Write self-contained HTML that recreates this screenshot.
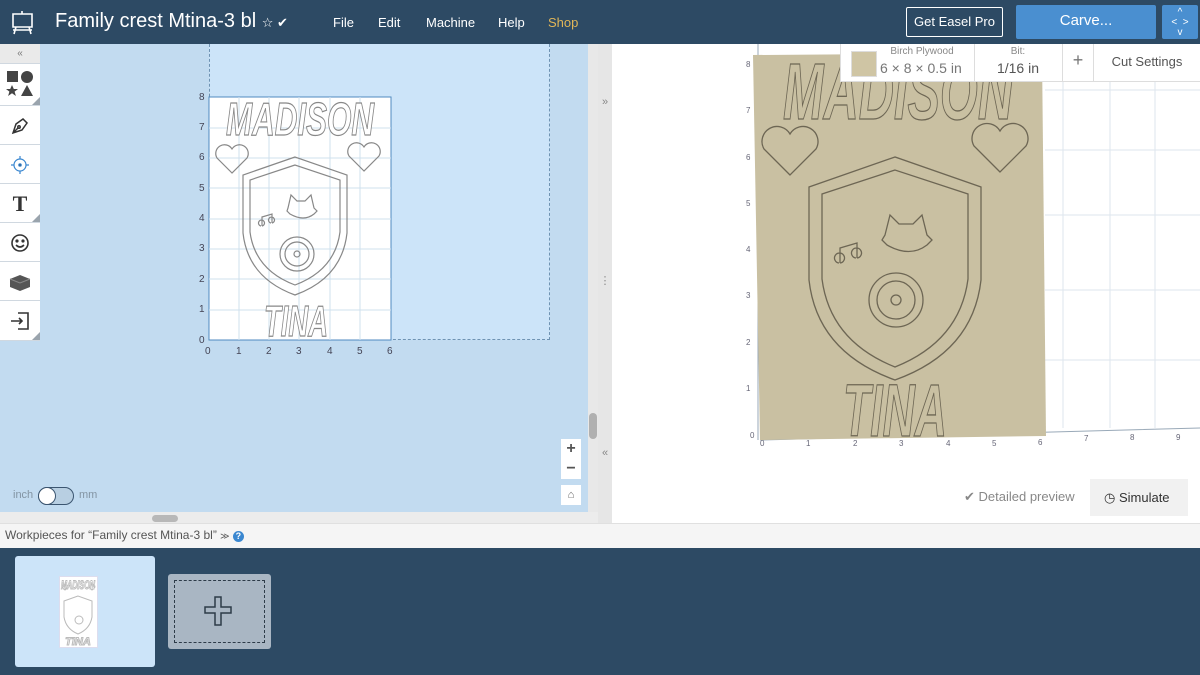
<!DOCTYPE html>
<html><head><meta charset="utf-8"><style>
*{margin:0;padding:0;box-sizing:border-box}
body{width:1200px;height:675px;overflow:hidden;position:relative;font-family:"Liberation Sans","DejaVu Sans",sans-serif;background:#2d4a64}
.abs{position:absolute}
.hdr{left:0;top:0;width:1200px;height:44px;background:#2d4a64;color:#fff}
.menu{top:15px;font-size:13px;color:#fff}
.left{left:0;top:44px;width:588px;height:468px;background:#c2dbf0}
.tool{left:0;width:40px;background:#fff;border-bottom:1px solid #d0d8e0}
.tri{position:absolute;right:0;bottom:0;width:0;height:0;border-left:8px solid transparent;border-bottom:8px solid #9aa4ad}
.right{left:612px;top:44px;width:588px;height:479px;background:#fff}
</style></head><body>
<div class="abs hdr">
 <svg class="abs" style="left:10px;top:10px" width="26" height="26" viewBox="0 0 26 26" fill="none" stroke="#fff" stroke-width="1.6"><path d="M12 1v3M3 4h19v13H3zM6 17l-2 7M19 17l2 7M3 20h19"/></svg>
 <div class="abs" style="left:55px;top:10px;font-size:20px;">Family crest Mtina-3 bl <span style="font-size:13px">☆ ✔</span></div>
 <div class="abs menu" style="left:333px">File</div>
 <div class="abs menu" style="left:378px">Edit</div>
 <div class="abs menu" style="left:426px">Machine</div>
 <div class="abs menu" style="left:498px">Help</div>
 <div class="abs menu" style="left:548px;color:#e0b658">Shop</div>
 <div class="abs" style="left:906px;top:7px;width:97px;height:30px;border:1px solid #fff;border-radius:2px;font-size:13px;text-align:center;line-height:28px">Get Easel Pro</div>
 <div class="abs" style="left:1016px;top:5px;width:140px;height:34px;background:#4a8fd0;border-radius:2px;font-size:15px;text-align:center;line-height:32px">Carve...</div>
 <div class="abs" style="left:1162px;top:5px;width:36px;height:34px;background:#4a8fd0;border-radius:2px;font-size:10px;text-align:center;line-height:10px;padding-top:3px">^<br>&lt;&nbsp;&nbsp;&gt;<br>v</div>
</div>

<div class="abs left">
 <div class="abs" style="left:209px;top:0;width:341px;height:296px;background:#cce4f9;border:1px dashed #6f93b3;border-top:none"></div>
</div>
<div class="abs tool" style="top:44px;height:20px;background:#eaeaea;text-align:center;font-size:10px;color:#777;line-height:20px">«</div>
<div class="abs tool" style="top:64px;height:42px"><svg class="abs" style="left:6px;top:6px" width="28" height="28" viewBox="0 0 28 28" fill="#444"><rect x="1" y="1" width="11" height="11"/><circle cx="21" cy="7" r="6"/><path d="M6 15l1.8 4h4.2l-3.4 2.6 1.3 4.4L6 23.3 2.1 26l1.3-4.4L0 19h4.2zM21 15l6 11H15z"/></svg><div class="tri"></div></div>
<div class="abs tool" style="top:106px;height:39px"><svg class="abs" style="left:10px;top:10px" width="20" height="20" viewBox="0 0 20 20" fill="none" stroke="#333" stroke-width="1.5"><path d="M3 17l3-9 7-5 4 4-5 7zM3 17l5-5"/><circle cx="9" cy="11" r="1.2"/></svg></div>
<div class="abs tool" style="top:145px;height:39px"><svg class="abs" style="left:10px;top:10px" width="20" height="20" viewBox="0 0 20 20" fill="none" stroke="#3a87d0" stroke-width="1.2"><circle cx="10" cy="10" r="6"/><circle cx="10" cy="10" r="1.2" fill="#333"/><path d="M10 1v3M10 16v3M1 10h3M16 10h3"/></svg></div>
<div class="abs tool" style="top:184px;height:39px;font-family:'Liberation Serif',serif;font-weight:bold;font-size:22px;text-align:center;line-height:39px;color:#333">T<div class="tri"></div></div>
<div class="abs tool" style="top:223px;height:39px"><svg class="abs" style="left:10px;top:10px" width="20" height="20" viewBox="0 0 20 20" fill="none" stroke="#333" stroke-width="1.6"><circle cx="10" cy="10" r="8"/><circle cx="7" cy="8" r=".8" fill="#333"/><circle cx="13" cy="8" r=".8" fill="#333"/><path d="M6 12q4 4 8 0"/></svg></div>
<div class="abs tool" style="top:262px;height:39px"><svg class="abs" style="left:9px;top:11px" width="22" height="18" viewBox="0 0 22 18"><path d="M1 6l10-4 10 4v8l-10 4-10-4z" fill="#555"/><path d="M1 6l10 4 10-4" fill="none" stroke="#888"/></svg></div>
<div class="abs tool" style="top:301px;height:40px"><svg class="abs" style="left:10px;top:10px" width="20" height="20" viewBox="0 0 20 20" fill="none" stroke="#333" stroke-width="1.6"><path d="M8 2h10v16H8M1 10h11M9 7l3 3-3 3"/></svg><div class="tri"></div></div>

<svg class="abs" style="left:196px;top:86px" width="210" height="270" viewBox="196 86 210 270">
 <rect x="209" y="97" width="182" height="243" fill="#fff" stroke="#4f8ac0"/>
 <g stroke="#cfe0ee" stroke-width="1">
  <path d="M239 97v243M269 97v243M299 97v243M330 97v243M360 97v243M209 128h182M209 158h182M209 188h182M209 219h182M209 249h182M209 279h182M209 310h182"/>
 </g>
 <g font-size="10" fill="#445" font-family="Liberation Sans">
  <text x="199" y="100">8</text><text x="199" y="130">7</text><text x="199" y="160">6</text><text x="199" y="191">5</text><text x="199" y="221">4</text><text x="199" y="251">3</text><text x="199" y="282">2</text><text x="199" y="312">1</text><text x="199" y="343">0</text>
  <text x="205" y="354">0</text><text x="236" y="354">1</text><text x="266" y="354">2</text><text x="296" y="354">3</text><text x="327" y="354">4</text><text x="357" y="354">5</text><text x="387" y="354">6</text>
 </g>
 <g fill="none" stroke="#888" stroke-width="1.2">
  <text x="300" y="135" text-anchor="middle" font-size="46" font-weight="bold" font-style="italic" textLength="148" lengthAdjust="spacingAndGlyphs" fill="#fff" stroke="#888" font-family="Liberation Sans">MADISON</text>
  <text x="296" y="336" text-anchor="middle" font-size="44" font-weight="bold" font-style="italic" textLength="64" lengthAdjust="spacingAndGlyphs" fill="#fff" stroke="#888" font-family="Liberation Sans">TINA</text>
  <path d="M232 173l-15-15a8 8 0 0115-9 8 8 0 0115 9z"/>
  <path d="M364 171l-15-15a8 8 0 0115-9 8 8 0 0115 9z"/>
  <path d="M295 157l-52 18v58q5 45 52 62 47-17 52-62v-58z"/>
  <path d="M295 165l-45 15v52q5 38 45 53 40-15 45-53v-52z"/>
  <path d="M288 208l3-13 6 6h8l6-6 3 13 3 3-3 3q-10 8-24 0l-3-3z"/>
  <path d="M262 226v-9l10-3v9M262 226a3 3 0 10-1 0M272 223a3 3 0 10-1 0"/>
  <circle cx="297" cy="254" r="17"/><circle cx="297" cy="254" r="12"/><circle cx="297" cy="254" r="3"/>
 </g>
</svg>

<div class="abs" style="left:561px;top:439px;width:20px;height:40px;background:#fff;font-size:16px;text-align:center;color:#555;line-height:20px;font-weight:bold">+<br>−</div>
<div class="abs" style="left:561px;top:485px;width:20px;height:20px;background:#fff;font-size:11px;text-align:center;color:#666;line-height:20px">⌂</div>
<div class="abs" style="left:13px;top:489px;font-size:11px;color:#8394a3">inch</div>
<div class="abs" style="left:38px;top:487px;width:36px;height:18px;border-radius:9px;border:1px solid #3b5570;background:#b8cfe2"></div>
<div class="abs" style="left:38px;top:487px;width:18px;height:18px;border-radius:9px;border:1px solid #3b5570;background:#fff"></div>
<div class="abs" style="left:79px;top:489px;font-size:11px;color:#8394a3">mm</div>
<div class="abs" style="left:588px;top:44px;width:10px;height:468px;background:#e8e8e8"></div>
<div class="abs" style="left:589px;top:413px;width:8px;height:26px;border-radius:4px;background:#b0b0b0"></div>
<div class="abs" style="left:0;top:512px;width:598px;height:11px;background:#ececec"></div>
<div class="abs" style="left:152px;top:515px;width:26px;height:7px;border-radius:4px;background:#b8b8b8"></div>
<div class="abs" style="left:598px;top:44px;width:14px;height:479px;background:#e6e6e6;color:#888;font-size:11px;text-align:center"><div style="margin-top:52px">»</div><div style="margin-top:166px">⋮</div><div style="margin-top:160px">«</div></div>

<div class="abs right"></div>
<svg class="abs" style="left:612px;top:44px" width="588" height="479" viewBox="612 44 588 479">
 <g stroke="#dde6ee"><path d="M1063 44v384M1110 44v384M1155 44v384M1045 90h155M1045 150h155M1045 215h155M1045 290h155M1045 360h155"/></g>
 <path d="M758 44v396M760 440l440-12" stroke="#99a9b8" fill="none"/>
 <path d="M753 55l289 -2 4 383-286 4z" fill="#c9c0a2"/>
 <g font-size="8" fill="#667" font-family="Liberation Sans"><text x="746" y="67">8</text><text x="746" y="113">7</text><text x="746" y="160">6</text><text x="746" y="206">5</text><text x="746" y="252">4</text><text x="746" y="298">3</text><text x="746" y="345">2</text><text x="746" y="391">1</text><text x="750" y="438">0</text>
 <text x="760" y="446">0</text><text x="806" y="446">1</text><text x="853" y="446">2</text><text x="899" y="446">3</text><text x="946" y="446">4</text><text x="992" y="446">5</text><text x="1038" y="445">6</text><text x="1084" y="441">7</text><text x="1130" y="440">8</text><text x="1176" y="440">9</text></g>
 <g fill="none" stroke="#6d6654" stroke-width="1.3">
  <text x="898" y="119" text-anchor="middle" font-size="80" font-weight="bold" font-style="italic" textLength="230" lengthAdjust="spacingAndGlyphs" font-family="Liberation Sans">MADISON</text>
  <text x="895" y="436" text-anchor="middle" font-size="74" font-weight="bold" font-style="italic" textLength="104" lengthAdjust="spacingAndGlyphs" font-family="Liberation Sans">TINA</text>
  <path d="M790 175l-26-26a13 13 0 0126-15 13 13 0 0126 15z"/>
  <path d="M1000 172l-26-26a13 13 0 0126-15 13 13 0 0126 15z"/>
  <path d="M895 157l-86 30v93q8 72 86 100 78-28 86-100v-93z"/>
  <path d="M895 170l-73 24v85q8 62 73 88 65-26 73-88v-85z"/>
  <path d="M885 235l5-20 9 9h14l9-9 5 20 5 5-5 5q-17 13-40 0l-5-5z"/>
  <path d="M840 263v-15l17-5v15M840 263a5 5 0 10-1 0M857 258a5 5 0 10-1 0"/>
  <circle cx="896" cy="300" r="27"/><circle cx="896" cy="300" r="19"/><circle cx="896" cy="300" r="5"/>
 </g>
</svg>
<div class="abs" style="left:840px;top:44px;width:370px;height:38px;background:#fff;border:1px solid #ddd;border-top:none"></div>
<div class="abs" style="left:851px;top:51px;width:26px;height:26px;background:#cfc5a4;border:1px solid #ddd"></div>
<div class="abs" style="left:880px;top:46px;font-size:10px;color:#888;width:84px;text-align:center">Birch Plywood</div>
<div class="abs" style="left:880px;top:60px;font-size:14px;color:#777">6 × 8 × 0.5 in</div>
<div class="abs" style="left:974px;top:44px;width:1px;height:38px;background:#ddd"></div>
<div class="abs" style="left:975px;top:46px;width:86px;text-align:center;font-size:10px;color:#888">Bit:</div>
<div class="abs" style="left:975px;top:60px;width:86px;text-align:center;font-size:14px;color:#555">1/16 in</div>
<div class="abs" style="left:1062px;top:44px;width:1px;height:38px;background:#ddd"></div>
<div class="abs" style="left:1063px;top:50px;width:30px;text-align:center;font-size:18px;color:#777">+</div>
<div class="abs" style="left:1093px;top:44px;width:1px;height:38px;background:#ddd"></div>
<div class="abs" style="left:1094px;top:54px;width:106px;text-align:center;font-size:13px;color:#555">Cut Settings</div>
<div class="abs" style="left:964px;top:489px;font-size:13px;color:#888">✔ Detailed preview</div>
<div class="abs" style="left:1090px;top:479px;width:98px;height:37px;background:#f1f1f1;font-size:13px;color:#333;line-height:37px;padding-left:14px">◷ Simulate</div>

<div class="abs" style="left:0;top:523px;width:1200px;height:25px;background:#f5f5f5;border-top:1px solid #e0e0e0"></div>
<div class="abs" style="left:5px;top:528px;font-size:12px;color:#555">Workpieces for “Family crest Mtina-3 bl” <span style="font-size:9px">≫</span> <span style="display:inline-block;width:11px;height:11px;border-radius:6px;background:#3a87d0;color:#fff;font-size:9px;text-align:center;line-height:11px;font-weight:bold">?</span></div>
<div class="abs" style="left:15px;top:556px;width:140px;height:111px;background:#cce4f9;border-radius:3px"></div>
<div class="abs" style="left:59px;top:576px;width:39px;height:72px;background:#fff;border:1px solid #dde"></div>
<svg class="abs" style="left:59px;top:576px" width="39" height="72" viewBox="0 0 39 72" fill="none" stroke="#bbb"><path d="M19 20l-14 5v16q2 12 14 17 12-5 14-17v-16z"/><circle cx="20" cy="44" r="4"/><path d="M6 14l-3-3a2 2 0 013-2 2 2 0 013 2zM33 14l-3-3a2 2 0 013-2 2 2 0 013 2z"/><text x="19" y="13" text-anchor="middle" font-size="12" font-weight="bold" font-style="italic" textLength="34" lengthAdjust="spacingAndGlyphs" fill="#fff" font-family="Liberation Sans">MADISON</text><text x="19" y="69" text-anchor="middle" font-size="11" font-weight="bold" font-style="italic" fill="#fff" font-family="Liberation Sans">TINA</text></svg>
<div class="abs" style="left:168px;top:574px;width:103px;height:75px;background:#a9b6c3;border-radius:3px"></div>
<div class="abs" style="left:174px;top:580px;width:91px;height:63px;border:1px dashed #2d3b48"></div>
<svg class="abs" style="left:204px;top:596px" width="30" height="30" viewBox="0 0 30 30"><path d="M11 1h6v10h10v6H17v12h-6V17H1v-6h10z" fill="#a9b6c3" stroke="#2d3b48" stroke-width="1.5"/></svg>
</body></html>
